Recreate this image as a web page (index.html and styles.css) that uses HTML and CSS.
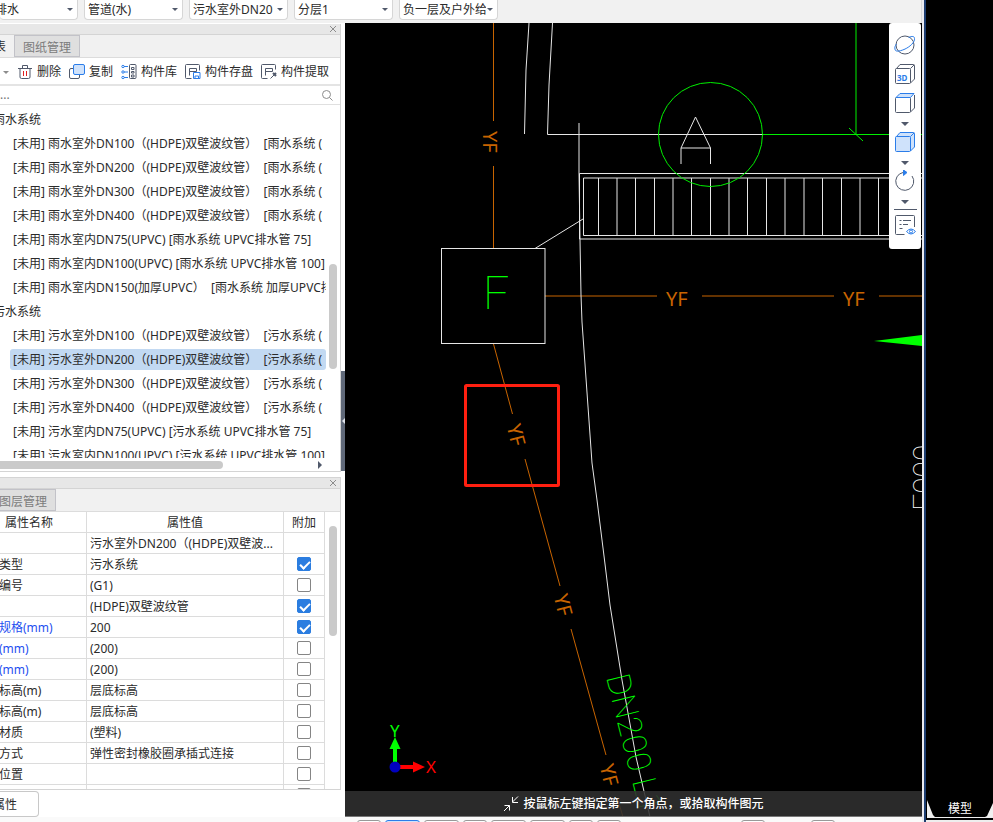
FILE: index.html
```html
<!DOCTYPE html>
<html lang="zh-CN">
<head>
<meta charset="utf-8">
<title>构件管理</title>
<link rel="stylesheet" href="styles.css">
</head>
<body>
<div class="desktop">
  <div class="app">
    <header class="topbar">
      <span class="combo"><select aria-label="专业"><option>排水</option></select></span>
      <span class="combo"><select aria-label="构件类型"><option>管道(水)</option></select></span>
      <span class="combo"><select aria-label="构件"><option>污水室外DN20</option></select></span>
      <span class="combo"><select aria-label="分层"><option>分层1</option></select></span>
      <span class="combo"><select aria-label="图纸"><option>负一层及户外给</option></select></span>
    </header>

    <div class="main">
      <aside class="side">
        <section class="dock">
          <div class="dock-title"><button class="close" aria-label="关闭"><svg width="8" height="8" viewBox="0 0 8 8"><path d="M1 1l6 6M7 1L1 7"/></svg></button></div>
          <nav class="tabs"><button class="tab current first">表</button><button class="tab">图纸管理</button></nav>
          <div class="tools">
            <button class="tool-more" aria-label="更多"><i class="caret grey"></i></button>
            <button class="tool"><svg width="16" height="16" viewBox="0 0 16 16"><path d="M1 4.500h14M5.500 4V1.500h5V4M3 4.500v8.500q0 1.500 1.500 1.500h7q1.500 0 1.500-1.500V4.500"/><path class="red" d="M6.500 7v5M9.500 7v5"/></svg>删除</button>
            <button class="tool"><svg width="16" height="16" viewBox="0 0 16 16"><path d="M4 4.500H2q-1.500 0-1.500 1.500v7q0 1.500 1.500 1.500h7q1.500 0 1.500-1.500v-2"/><rect class="blue tint" x="4.500" y=".5" width="11" height="10" rx="1.500"/></svg>复制</button>
            <button class="tool"><svg width="16" height="16" viewBox="0 0 16 16"><path class="blue" d="M3 2.500h4M3 8h4M3 13.500h4"/><circle class="blue" cx="2" cy="2.500" r="1.200"/><circle class="blue" cx="2" cy="8" r="1.200"/><circle class="blue" cx="2" cy="13.500" r="1.200"/><rect x="8.500" y=".5" width="6.500" height="14" rx="1"/><path d="M10.500 3.500h2.500v2h-2.500zM10.500 7.500h2.500v1.500h-2.500zM10.500 11h2.500v2h-2.500z"/></svg>构件库</button>
            <button class="tool"><svg width="16" height="16" viewBox="0 0 16 16"><path d="M14.500 6.500V1.500q0-1-1-1H1.500Q.5 .5 .5 1.500v12q0 1 1 1h5"/><path d="M4.500 11.500v-7h7v3h-7"/><path class="blue" d="M8.500 8.500h6.500v6h-6.500zM10 14.500v-2.500h3.500V14.500"/></svg>构件存盘</button>
            <button class="tool"><svg width="16" height="16" viewBox="0 0 16 16"><path d="M14.500 5.500V1.500q0-1-1-1H1.500Q.5 .5 .5 1.500v12q0 1 1 1h5"/><path d="M4.500 11.500v-7h7v3h-7"/><path d="M9.500 14.500l4-4"/><path class="thick" d="M12 9l3 3M13.500 10.500l1.500-1.500"/></svg>构件提取</button>
          </div>
          <div class="search">
            <input type="search" aria-label="搜索" placeholder="...">
            <svg width="12" height="12" viewBox="0 0 12 12"><circle cx="5.500" cy="5.500" r="4"/><path d="M8.500 8.500l3 3"/></svg>
          </div>
          <div class="tree-area">
            <ul class="tree">
              <li class="group">雨水系统</li>
              <li><span>[未用] 雨水室外DN100（(HDPE)双壁波纹管）&nbsp; [雨水系统 (</span></li>
              <li><span>[未用] 雨水室外DN200（(HDPE)双壁波纹管）&nbsp; [雨水系统 (</span></li>
              <li><span>[未用] 雨水室外DN300（(HDPE)双壁波纹管）&nbsp; [雨水系统 (</span></li>
              <li><span>[未用] 雨水室外DN400（(HDPE)双壁波纹管）&nbsp; [雨水系统 (</span></li>
              <li><span>[未用] 雨水室内DN75(UPVC) [雨水系统 UPVC排水管 75]</span></li>
              <li><span>[未用] 雨水室内DN100(UPVC) [雨水系统 UPVC排水管 100]</span></li>
              <li><span>[未用] 雨水室内DN150(加厚UPVC）&nbsp; [雨水系统 加厚UPVC排水管]</span></li>
              <li class="group">污水系统</li>
              <li><span>[未用] 污水室外DN100（(HDPE)双壁波纹管）&nbsp; [污水系统 (</span></li>
              <li class="selected"><span>[未用] 污水室外DN200（(HDPE)双壁波纹管）&nbsp; [污水系统 (</span></li>
              <li><span>[未用] 污水室外DN300（(HDPE)双壁波纹管）&nbsp; [污水系统 (</span></li>
              <li><span>[未用] 污水室外DN400（(HDPE)双壁波纹管）&nbsp; [污水系统 (</span></li>
              <li><span>[未用] 污水室内DN75(UPVC) [污水系统 UPVC排水管 75]</span></li>
              <li><span>[未用] 污水室内DN100(UPVC) [污水系统 UPVC排水管 100]</span></li>
            </ul>
            <div class="vscroll"><i class="thumb tree-thumb"></i></div>
          </div>
          <div class="hscroll"><i class="thumb"></i><i class="arrow-right"></i></div>
        </section>

        <section class="dock props-dock">
          <div class="dock-title"><button class="close" aria-label="关闭"><svg width="8" height="8" viewBox="0 0 8 8"><path d="M1 1l6 6M7 1L1 7"/></svg></button></div>
          <nav class="tabs"><button class="tab edge">图层管理</button></nav>
          <div class="props">
            <table>
              <thead><tr><th class="name-col">属性名称</th><th class="value-col">属性值</th><th class="add-col">附加</th></tr></thead>
              <tbody>
                <tr><td></td><td>污水室外DN200（(HDPE)双壁波...</td><td></td></tr>
                <tr><td>类型</td><td>污水系统</td><td><input type="checkbox" aria-label="附加 类型" checked></td></tr>
                <tr><td>编号</td><td>(G1)</td><td><input type="checkbox" aria-label="附加 编号"></td></tr>
                <tr><td></td><td>(HDPE)双壁波纹管</td><td><input type="checkbox" aria-label="附加 材料" checked></td></tr>
                <tr class="key"><td>规格(mm)</td><td>200</td><td><input type="checkbox" aria-label="附加 规格" checked></td></tr>
                <tr class="key"><td>(mm)</td><td>(200)</td><td><input type="checkbox" aria-label="附加 外径"></td></tr>
                <tr class="key"><td>(mm)</td><td>(200)</td><td><input type="checkbox" aria-label="附加 内径"></td></tr>
                <tr><td>标高(m)</td><td>层底标高</td><td><input type="checkbox" aria-label="附加 起点标高"></td></tr>
                <tr><td>标高(m)</td><td>层底标高</td><td><input type="checkbox" aria-label="附加 终点标高"></td></tr>
                <tr><td>材质</td><td>(塑料)</td><td><input type="checkbox" aria-label="附加 材质"></td></tr>
                <tr><td>方式</td><td>弹性密封橡胶圈承插式连接</td><td><input type="checkbox" aria-label="附加 方式"></td></tr>
                <tr><td>位置</td><td></td><td><input type="checkbox" aria-label="附加 位置"></td></tr>
                <tr><td></td><td></td><td><input type="checkbox" aria-label="附加"></td></tr>
              </tbody>
            </table>
            <div class="vscroll"><i class="thumb props-thumb"></i></div>
          </div>
        </section>
        <div class="side-foot"><button class="prop-button">属性</button></div>
        <button class="collapse" aria-label="收起"></button>
      </aside>

      <main class="canvas">
        <svg class="drawing" viewBox="345 23 577 794" preserveAspectRatio="xMinYMin slice">
          <g class="orange">
            <path d="M493.500 23V121M493.500 166V248M493.500 344L512.500 414M525 459L560 586M571 629L606 755M618 800L623 817"/>
            <path d="M545 296H657M702 296H834M879 296H922"/>
            <text class="pipe" x="666" y="306">YF</text>
            <text class="pipe" x="843" y="306">YF</text>
            <text class="pipe" transform="translate(483 131) rotate(90)">YF</text>
            <text class="pipe mid" y="7" transform="translate(516 435) rotate(75)">YF</text>
            <text class="pipe mid" y="7" transform="translate(563 605) rotate(75)">YF</text>
            <text class="pipe mid" y="7" transform="translate(609 775) rotate(75)">YF</text>
          </g>
          <g class="white">
            <path d="M529 23L526 70L524.500 134M552.500 23L549 85L547.500 134.500H763"/>
            <path d="M579 123V173L580 240L581 295L582 322L592 463L597 500L604.500 560L610 605L622 680L636 757L650 817"/>
            <path d="M922 173.500H579.500V239H922M922 178H583.500V235.500H922"/>
            <path d="M598.500 178V235M617 178V235M635.500 178V235M654.500 178V235M673 178V235M691.500 178V235M710.500 178V235M729 178V235M747.500 178V235M766.500 178V235M785 178V235M804 178V235M822.500 178V235M841.500 178V235M860 178V235M878.500 178V235"/>
            <path d="M535 248.500L583 219"/>
            <rect x="441.500" y="248.500" width="103.500" height="95"/>
            <path d="M681 164V148L695.500 117L710.500 148V164M681 148H710.500"/>
            <text class="thin" transform="translate(934 511) rotate(-90)">F000</text>
          </g>
          <g class="green">
            <circle cx="710.500" cy="134.500" r="52"/>
            <path d="M763 134.500H922"/>
            <path class="dim" d="M856 23V134M849 128L863 141"/>
            <path class="solid" d="M874 341L922 335V346Z"/>
            <text class="thin tall" x="483" y="309">F</text>
            <text class="thin label" transform="translate(606 677) rotate(76)">DN200 L1</text>
          </g>
          <rect class="pick" x="465.500" y="385.500" width="93" height="100" rx="1"/>
          <path class="axis-y" d="M393 763V749H389.500L395 737L400.500 749H397V763Z"/>
          <path class="axis-x" d="M399 765H413V761.500L425 767L413 772.500V769H399Z"/>
          <circle class="origin" cx="395" cy="767" r="5.500"/>
          <text class="axis-y axis" x="390" y="737">Y</text>
          <text class="axis-x axis" x="426" y="773">X</text>
        </svg>

        <div class="view-tools">
          <button aria-label="动态观察"><svg width="22" height="22" viewBox="0 0 22 22"><circle cx="11" cy="11" r="9"/><path class="blue" d="M14.500 3.500C18 2 20.500 2 20.500 4.500C21 8 16 13 10 15.500C5 17.500 1 18 1 15C.5 13.500 1 12 2.500 10"/></svg></button>
          <button aria-label="三维"><svg width="22" height="22" viewBox="0 0 22 22"><path d="M1.500 6.500q0-1 1-1h13q1 0 1 1v13q0 1-1 1h-13q-1 0-1-1zM2.500 5.500L6 1.500h13.500q1 0 1 1v13.500l-4 4M16.500 5.500L20 2"/><text x="3" y="18">3D</text></svg></button>
          <button aria-label="俯视"><svg width="22" height="22" viewBox="0 0 22 22"><path d="M1.500 6.500q0-1 1-1h13q1 0 1 1v13q0 1-1 1h-13q-1 0-1-1zM20.500 3v13l-4 4"/><path class="blue tint" d="M2 5.500L6 1.500h14l-3.500 4z"/></svg></button>
          <i class="caret"></i>
          <button aria-label="着色"><svg width="22" height="22" viewBox="0 0 22 22"><path class="blue tint" d="M2.500 5.500L6 1.500h13.500q1 0 1 1v13.500l-4 4l-1 .5h-13q-1 0-1-1v-13q0-1 1-1z"/><path class="blue" d="M2.500 5.500h13q1 0 1 1v13.500M16.500 5.500L20 2"/></svg></button>
          <i class="caret"></i>
          <button aria-label="旋转"><svg width="22" height="22" viewBox="0 0 22 22"><path d="M9 2.500A9 9 0 1 0 18 6"/><path class="arrow" d="M9.500 0L13 2.500L9.500 5.500Z"/></svg></button>
          <i class="caret"></i>
          <hr>
          <button aria-label="显示设置"><svg width="22" height="22" viewBox="0 0 22 22"><path d="M20.500 13V2.500q0-1-1-1h-17q-1 0-1 1v17q0 1 1 1h8M5.500 6.500h2M9 6.500h8M5.500 10.500h2M9 10.500h5M5.500 14.500h3"/><path class="blue" d="M12.500 17.500q4.500-5 9 0q-4.500 5-9 0z"/><circle class="blue" cx="17" cy="17.500" r="1.500"/></svg></button>
        </div>

        <div class="hint"><svg width="16" height="16" viewBox="0 0 16 16"><path d="M15 .5L9.500 6M9.500 1V6.500H15M1 15L6.500 9.500M1.500 9.500H6.500V14.500"/></svg>按鼠标左键指定第一个角点，或拾取构件图元</div>
      </main>
    </div>

    <footer class="bottombar">
      <div class="slots">
        <i class="small"></i><i class="on"></i><i></i><i class="small"></i><i></i><i></i><i class="small"></i><i class="small"></i>
      </div>
      <div class="slots right"><i class="small"></i><i class="small"></i></div>
    </footer>
  </div>

  <div class="cad">
    <div class="sheet-tabs">
      <svg width="67" height="19" viewBox="0 0 67 19"><path d="M1 0V18H10L7 15Z"/><path d="M67 3L61 16L57 18H67Z"/><path d="M1 17.500H67" stroke="#eee"/></svg>
      <button>模型</button>
    </div>
  </div>
</div>
</body>
</html>
```
FILE: styles.css
```css
* { box-sizing: border-box; }

body {
  margin: 0;
  height: 100vh;
  overflow: hidden;
  background: #fff;
  color: #2b2b2b;
  font: 12px/20px "Noto Sans", "Noto Sans CJK SC", sans-serif;
}

button, select, input { font: inherit; color: inherit; }
button { padding: 0; border: 0; background: none; }

svg { fill: none; stroke: #50596b; stroke-width: 1; flex: none; }
svg .blue { stroke: #2b7de9; }
svg .tint { fill: #cfe2fb; }
svg .red { stroke: #e02020; }
svg .thick { stroke-width: 2; }

.desktop { display: flex; height: 100%; }
.app { flex: 1; min-width: 0; display: flex; flex-direction: column; }

/* top selectors */
.topbar {
  display: flex;
  gap: 6px;
  height: 23px;
  padding-right: 8px;
  background: #f1f1f1;
  border-right: 1px solid #d8d8d8;
}
.combo { position: relative; width: 99px; height: 20px; }
.combo:first-child { width: 78px; }
.combo select {
  appearance: none;
  width: 100%;
  height: 20px;
  padding: 0 11px 0 3px;
  border: 1px solid #d6d6d6;
  border-top: 0;
  border-radius: 0 0 4px 4px;
  background: #fff;
  line-height: 19px;
  text-overflow: clip;
}
.combo:first-child select { padding: 0; text-indent: -5px; border-left: 0; }
.combo::after {
  content: "";
  position: absolute;
  right: 5px;
  top: 8px;
  border: 3px solid transparent;
  border-top-color: #50596b;
  border-bottom: 0;
}

.main { flex: 1; min-height: 0; display: flex; }

/* left docks */
.side { position: relative; width: 345px; display: flex; flex-direction: column; }
.dock {
  width: 341px;
  margin-top: 1px;
  display: flex;
  flex-direction: column;
  flex: none;
  border-right: 1px solid #d4d4d4;
  border-bottom: 1px solid #d4d4d4;
}
.dock-title {
  height: 11px;
  display: flex;
  justify-content: flex-end;
  align-items: center;
  padding-right: 3px;
  background: #e7e7e7;
  border-bottom: 1px solid #d4d4d4;
}
.close { display: flex; }
.close svg { stroke: #8c8c8c; }
.tabs { display: flex; height: 23px; background: #f1f1f1; border-bottom: 1px solid #dcdcdc; }
.tab {
  padding: 2px 8px 0;
  background: #dfdfdf;
  border: 1px solid #c2c2c8;
  color: #7c7c7c;
}
.tab.first { width: 14px; padding: 2px 0 0; border: 0; background: #f1f1f1; color: #2b2b2b; text-indent: -6px; text-align: left; }
.tab.edge { border-left: 0; padding: 2px 8px 0 0; text-indent: -1px; }

.tools { display: flex; gap: 8px; height: 28px; border-bottom: 2px solid #e4e4e4; padding-top: 2px; }
.tool-more { width: 9px; display: flex; justify-content: flex-end; align-items: center; }
.tool { display: flex; align-items: center; gap: 4px; white-space: nowrap; }
.caret {
  display: block;
  border: 4px solid transparent;
  border-top-color: #50596b;
  border-bottom: 0;
}
.caret.grey { border-width: 3px 3px 0; border-top-color: #8c8c8c; }

.search { display: flex; align-items: center; height: 19px; padding-right: 7px; border-bottom: 1px solid #e0e0e0; }
.search input { flex: 1; min-width: 0; height: 18px; padding: 0; border: 0; outline: 0; background: none; }
.search svg { stroke: #8c8c8c; }

.tree-area { display: flex; height: 353px; }
.tree { flex: 1; min-width: 0; margin: 0; padding: 2px 0 0; list-style: none; overflow: hidden; }
.tree li { height: 24px; padding: 2px 0 1px 10px; line-height: 21px; white-space: nowrap; }
.tree li span { display: block; padding-left: 3px; border-radius: 3px; }
.tree .group { padding-left: 0; text-indent: -7px; }
.tree .selected span { background: #c2d9f2; }

.vscroll { width: 14px; flex: none; padding-left: 3px; }
.thumb { display: block; width: 8px; border-radius: 4px; background: #cacaca; }
.tree-thumb { height: 105px; margin-top: 159px; }
.hscroll { display: flex; justify-content: space-between; align-items: center; height: 13px; padding-right: 18px; }
.hscroll .thumb { width: 223px; height: 8px; border-radius: 0 4px 4px 0; }
.arrow-right { border: 4px solid transparent; border-left-color: #50596b; border-right: 0; }

/* property grid */
.props-dock { margin-top: 5px; border-top: 1px solid #d4d4d4; }
.props { display: flex; height: 277px; overflow: hidden; }
.props table { flex: 1; table-layout: fixed; border-collapse: separate; border-spacing: 0; }
.props th, .props td {
  height: 21px;
  padding: 1px 3px 0;
  border-right: 1px solid #dcdcdc;
  border-bottom: 1px solid #dcdcdc;
  font-weight: 400;
  line-height: 19px;
  text-align: left;
  white-space: nowrap;
}
.props th { text-align: center; }
.name-col { width: 87px; }
.props .name-col { padding: 1px 28px 0 0; }
.value-col { width: 197px; }
.add-col { width: 41px; }
.props td:first-child { padding: 1px 0 0; text-indent: -1px; }
.props td:last-child { padding-top: 0; text-align: center; line-height: 0; }
.props .vscroll { width: 15px; padding-left: 4px; }
.key td:first-child { color: #1f4ff0; }
.props input {
  appearance: none;
  width: 14px;
  height: 14px;
  margin: 0;
  border: 1px solid #858585;
  border-radius: 2px;
  vertical-align: middle;
}
.props input:checked { background: #2b7de0; border-color: #2b7de0; }
.props input:checked::before {
  content: "";
  display: block;
  width: 8px;
  height: 4px;
  margin: 3px 2px;
  border: solid #fff;
  border-width: 0 0 2px 2px;
  transform: rotate(-45deg);
}
.props-thumb { height: 110px; margin-top: 14px; }

.side-foot { padding-top: 1px; }
.prop-button {
  width: 39px;
  height: 26px;
  padding-top: 1px;
  border: 1px solid #c8c8c8;
  border-left: 0;
  border-radius: 0 4px 4px 0;
  text-align: left;
  text-indent: -7px;
}
.collapse {
  position: absolute;
  right: 0;
  top: 348px;
  width: 4px;
  height: 100px;
  background: #606979;
}
.collapse::after {
  content: "";
  position: absolute;
  right: 0;
  top: 47px;
  border: 3px solid transparent;
  border-right-color: #dfe3ea;
  border-left: 0;
}

/* drawing area */
.canvas { position: relative; flex: 1; min-width: 0; overflow: hidden; background: #000; }
.drawing { display: block; width: 100%; height: 100%; }
.orange { stroke: #c86400; }
.white { stroke: #e6e6e6; }
.green { stroke: #00f000; }
.green .dim { stroke: #00f000; }
.green .solid { fill: #0f0; stroke: none; }
.drawing text { stroke: none; }
.orange text { fill: #c86400; }
.white text { fill: #fff; }
.green text { fill: #0f0; }
.pipe { font-size: 20px; }
.mid { text-anchor: middle; }
.thin { font-family: Roboto, sans-serif; font-weight: 100; font-size: 30px; }
.label { font-size: 33px; }
.tall { font-size: 46px; }
.axis { font-size: 17px; }
.axis-y { fill: #0f0; stroke: none; }
.axis-x { fill: #f00; stroke: none; }
.origin { fill: #0000c0; stroke: none; }
.pick { stroke: #ff1f10; stroke-width: 3; }

.view-tools {
  position: absolute;
  top: 0;
  right: 1px;
  width: 32px;
  padding: 9px 0 8px;
  display: flex;
  flex-direction: column;
  align-items: center;
  background: #fff;
  border-radius: 3px;
}
.view-tools button { display: flex; align-items: center; height: 29px; padding-bottom: 3px; }
.view-tools .caret { margin: 3px 0; }
.view-tools hr { width: 23px; margin: 2px 0; border: 0; border-top: 1px solid #50596b; }
.view-tools text { fill: #2b7de9; stroke: none; font-size: 8px; font-weight: 700; }
.view-tools .arrow { fill: #2b7de9; stroke: #2b7de9; }

.hint {
  position: absolute;
  left: 0;
  right: 0;
  bottom: 0;
  height: 26px;
  padding-top: 1px;
  display: flex;
  justify-content: center;
  align-items: center;
  gap: 4px;
  background: rgba(48, 48, 48, .88);
  border-bottom: 1px solid #777;
  color: #fff;
  font-weight: 500;
}
.hint svg { stroke: #fff; }

.bottombar { display: flex; justify-content: space-between; height: 5px; padding: 3px 87px 0 357px; overflow: hidden; background: #fafafa; }
.slots { display: flex; gap: 4px; }
.slots.right { gap: 46px; }
.slots i { width: 35px; height: 20px; border: 1px solid #999; border-radius: 3px; background: #fff; }
.slots .small { width: 24px; }
.slots .on { border-color: #2b7de9; background: #cfe2fb; }

/* neighbouring CAD window */
.cad {
  width: 71px;
  display: flex;
  flex-direction: column;
  justify-content: flex-end;
  background: #000;
  border-left: 2px solid #ebebf0;
  box-shadow: inset 2px 0 #1d3d70;
}
.sheet-tabs { position: relative; margin-left: 2px; border-bottom: 2px solid #eee; }
.sheet-tabs svg { display: block; margin-bottom: 1px; stroke: none; fill: #f0f0f0; }
.sheet-tabs button { position: absolute; left: 22px; top: -1px; color: #fff; }
```
